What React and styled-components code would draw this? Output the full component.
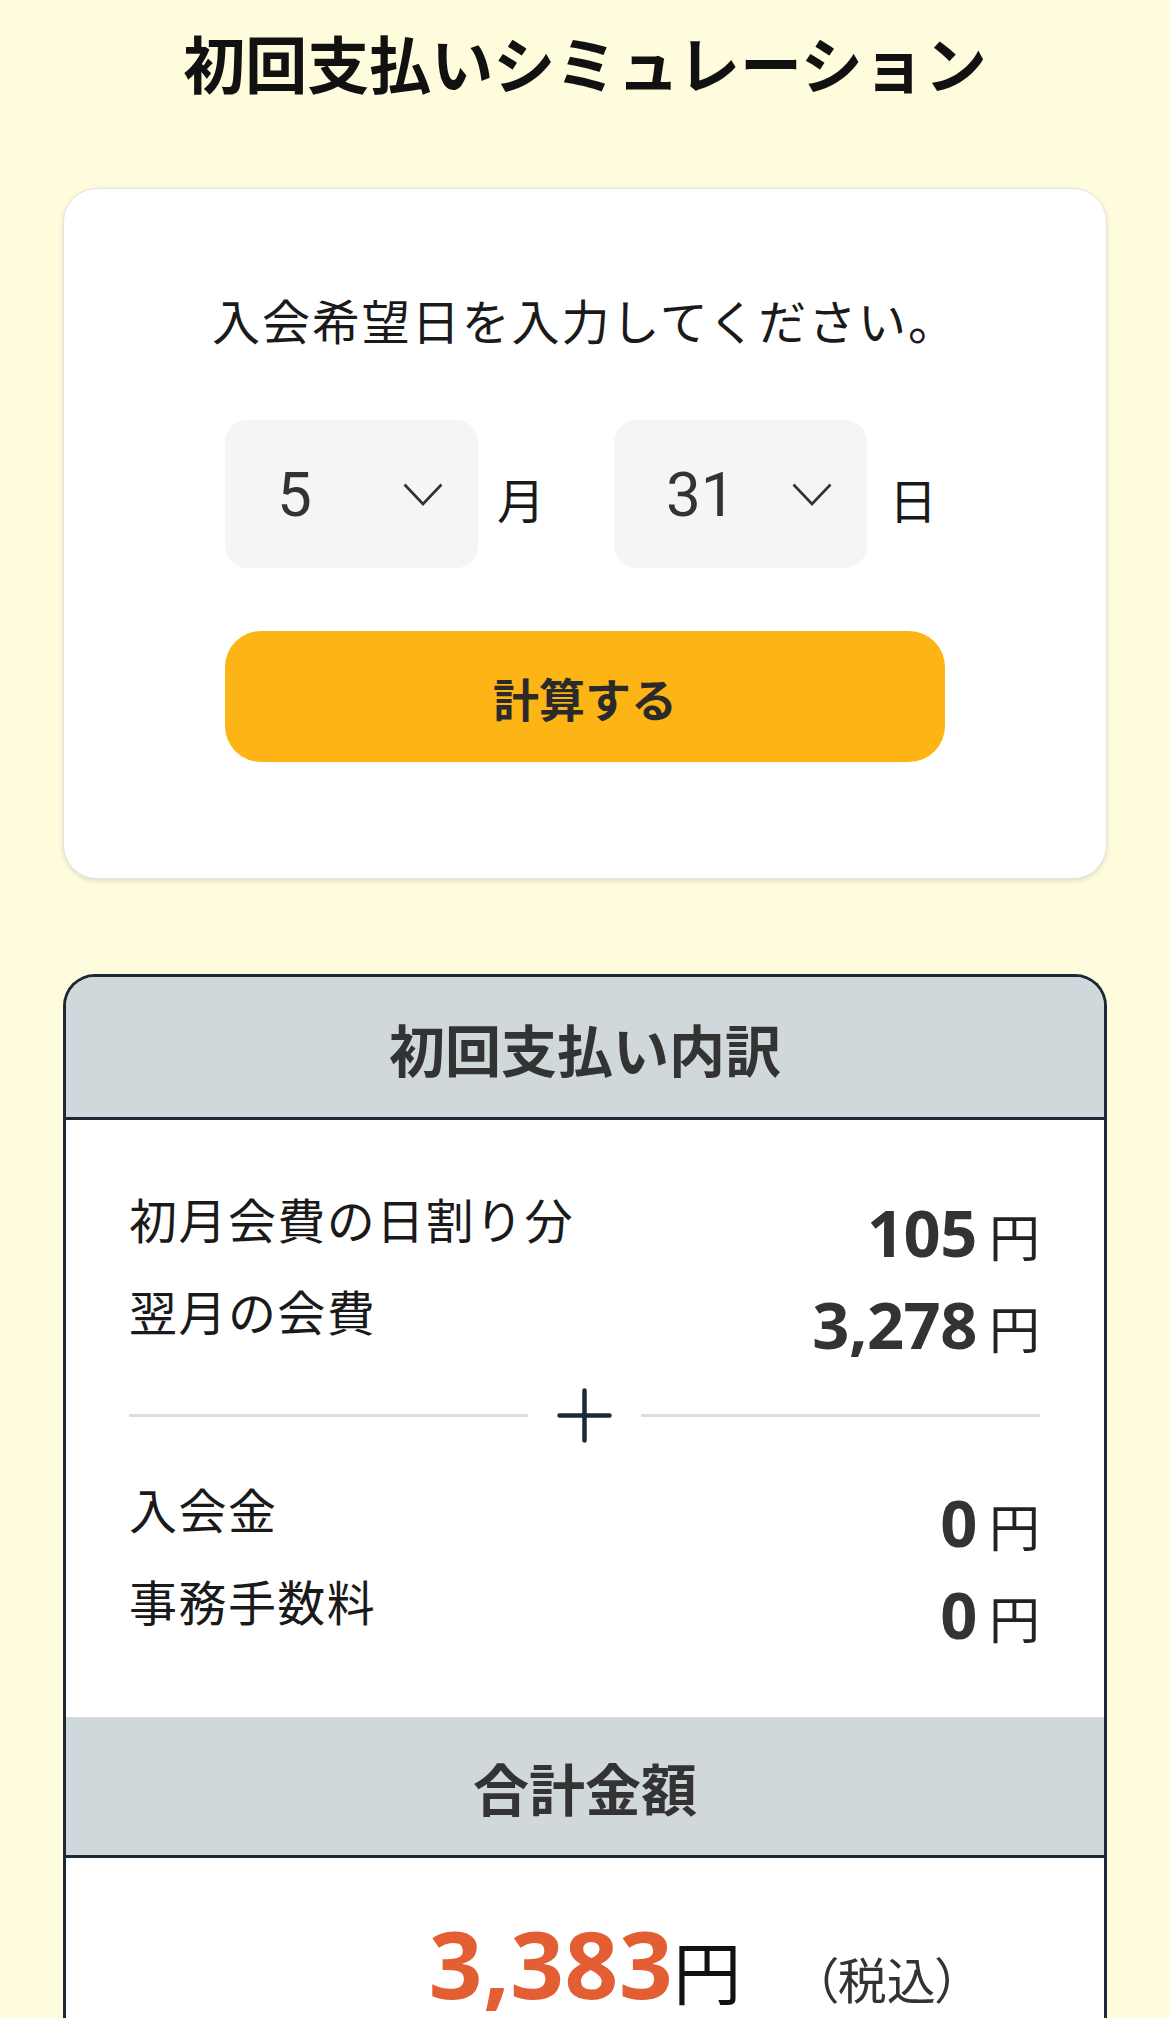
import React from "react";
import styled, { createGlobalStyle } from "styled-components";

const GlobalStyle = createGlobalStyle`
  html, body {
    margin: 0;
    padding: 0;
    background: #fefcdc;
  }
  body {
    font-family: "Noto Sans CJK JP", "Noto Sans", sans-serif;
    color: #1a1a1a;
  }
`;

const Page = styled.div`
  width: 1044px;
  margin: 0 auto;
  padding-top: 20px;
`;

const Title = styled.h1`
  margin: 0;
  font-size: 62px;
  font-weight: 700;
  line-height: 84px;
  text-align: center;
  color: #111;
`;

/* date input card */
const InputCard = styled.section`
  margin-top: 84px;
  padding: 96px 161px 116px;
  background: #fff;
  border: 1px solid #e4e4e4;
  border-radius: 34px;
  box-shadow: 0 2px 5px rgba(0, 0, 0, 0.12);
`;

const Prompt = styled.p`
  margin: 0 -40px;
  font-size: 48px;
  letter-spacing: 0.04em;
  line-height: 69px;
  white-space: nowrap;
  text-align: center;
  color: #1a1a1a;
`;

const DateRow = styled.div`
  margin-top: 66px;
  display: flex;
  align-items: center;
  gap: 69px;
`;

const DateField = styled.div`
  display: flex;
  align-items: center;
  gap: ${(p) => p.$gap}px;
`;

const SelectBox = styled.div`
  width: 253px;
  height: 148px;
  box-sizing: border-box;
  padding: 0 35px 0 52px;
  display: flex;
  align-items: center;
  justify-content: space-between;
  background: #f5f5f5;
  border-radius: 22px;
`;

const SelectValue = styled.span`
  font-family: Roboto, "Noto Sans", sans-serif;
  font-size: 62px;
  color: #333;
`;

const Unit = styled.span`
  font-size: 48px;
  line-height: 1;
  color: #1a1a1a;
  padding-top: 8px;
`;

const CalcButton = styled.button`
  margin-top: 63px;
  width: 100%;
  height: 131px;
  border: none;
  border-radius: 36px;
  background: #fdb515;
  font-family: "Noto Sans CJK JP", sans-serif;
  font-size: 46px;
  font-weight: 700;
  color: #2a2a2a;
`;

/* breakdown card */
const BreakdownCard = styled.section`
  margin-top: 95px;
  border: 3px solid #1c2a35;
  border-radius: 32px 32px 0 0;
  border-bottom: none;
  overflow: hidden;
  background: #fff;
`;

const SectionHead = styled.h2`
  margin: 0;
  height: ${(p) => p.$h}px;
  display: flex;
  align-items: center;
  justify-content: center;
  background: #d0d8dc;
  font-size: 56px;
  font-weight: 700;
  color: #333;
  border-bottom: 3px solid #1c2a35;
`;

const Body = styled.div`
  padding: 52px 64px 71px 63px;
`;

const Row = styled.div`
  height: 92px;
  display: flex;
  align-items: center;
  justify-content: space-between;
`;

const Label = styled.span`
  font-size: 48px;
  letter-spacing: 0.03em;
  color: #1a1a1a;
`;

const Amount = styled.span`
  padding-top: 28px;
  display: flex;
  align-items: baseline;
  gap: 12px;
  color: #333;
`;

const Num = styled.span`
  font-family: "Noto Sans", sans-serif;
  font-size: 65px;
  font-weight: 700;
  letter-spacing: -0.5px;
  line-height: 1;
`;

const Yen = styled.span`
  font-size: 51px;
  line-height: 1;
  color: #222;
`;

const Divider = styled.div`
  margin: 32px 0 19px;
  height: 55px;
  display: flex;
  align-items: center;
  gap: 29px;
`;

const Rule = styled.span`
  flex: 1;
  height: 3px;
  background: #dedede;
`;

const TotalRow = styled.div`
  padding-top: 50px;
  display: grid;
  grid-template-columns: 1fr auto 1fr;
  align-items: baseline;
`;

const TotalAmount = styled.div`
  grid-column: 2;
  display: flex;
  align-items: baseline;
`;

const TotalNum = styled.span`
  font-family: "Noto Sans", sans-serif;
  font-size: 94px;
  font-weight: 700;
  letter-spacing: 0.5px;
  line-height: 110px;
  color: #e35f33;
`;

const TotalYen = styled.span`
  font-size: 68px;
  color: #111;
`;

const TaxNote = styled.span`
  padding-left: 72px;
  font-size: 49px;
  font-feature-settings: "palt";
  color: #333;
`;

const Chevron = () => (
  <svg width="40" height="23" viewBox="0 0 40 23" fill="none">
    <polyline
      points="1.5,1.5 20,21 38.5,1.5"
      stroke="#333"
      strokeWidth="2.6"
      strokeLinejoin="miter"
    />
  </svg>
);

const Plus = () => (
  <svg width="55" height="55" viewBox="0 0 55 55">
    <path
      d="M27.5 2.5v50M2.5 27.5h50"
      stroke="#1c2a35"
      strokeWidth="4.5"
      strokeLinecap="round"
    />
  </svg>
);

const items = [
  [
    { label: "初月会費の日割り分", value: "105" },
    { label: "翌月の会費", value: "3,278" },
  ],
  [
    { label: "入会金", value: "0" },
    { label: "事務手数料", value: "0" },
  ],
];

const FeeRow = ({ label, value }) => (
  <Row>
    <Label>{label}</Label>
    <Amount>
      <Num>{value}</Num>
      <Yen>円</Yen>
    </Amount>
  </Row>
);

export default function App() {
  return (
    <Page>
      <GlobalStyle />
      <Title>初回支払いシミュレーション</Title>

      {/* date picker */}
      <InputCard>
        <Prompt>入会希望日を入力してください。</Prompt>
        <DateRow>
          <DateField $gap={19}>
            <SelectBox>
              <SelectValue>5</SelectValue>
              <Chevron />
            </SelectBox>
            <Unit>月</Unit>
          </DateField>
          <DateField $gap={22}>
            <SelectBox>
              <SelectValue>31</SelectValue>
              <Chevron />
            </SelectBox>
            <Unit>日</Unit>
          </DateField>
        </DateRow>
        <CalcButton>計算する</CalcButton>
      </InputCard>

      {/* breakdown */}
      <BreakdownCard>
        <SectionHead $h={140}>初回支払い内訳</SectionHead>
        <Body>
          {items[0].map((it) => (
            <FeeRow key={it.label} {...it} />
          ))}
          <Divider>
            <Rule />
            <Plus />
            <Rule />
          </Divider>
          {items[1].map((it) => (
            <FeeRow key={it.label} {...it} />
          ))}
        </Body>
        <SectionHead $h={138}>合計金額</SectionHead>
        <TotalRow>
          <TotalAmount>
            <TotalNum>3,383</TotalNum>
            <TotalYen>円</TotalYen>
          </TotalAmount>
          <TaxNote>（税込）</TaxNote>
        </TotalRow>
        <div style={{ height: 80 }} />
      </BreakdownCard>
    </Page>
  );
}
